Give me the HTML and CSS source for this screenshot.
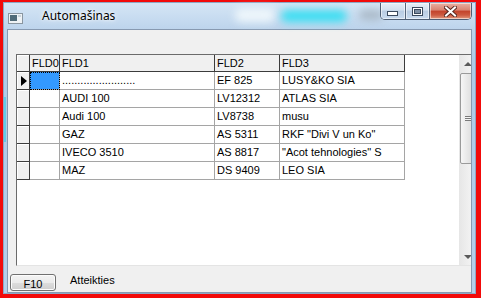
FILE: index.html
```html
<!DOCTYPE html>
<html>
<head>
<meta charset="utf-8">
<link rel="stylesheet" href="styles.css">
</head>
<body>
<div class="window">
  <div class="titlebar">
    <div class="glow glow-white"></div>
    <div class="glow glow-cyan"></div>
    <div class="glow glow-grey"></div>
    <svg class="app-icon" width="15" height="11" viewBox="0 0 15 11">
      <rect x="0.5" y="0.5" width="14" height="10" fill="#eef2f5" stroke="#8a96a0"/>
      <rect x="2" y="2" width="7" height="6" fill="#4f6a78"/>
      <rect x="10" y="2" width="3" height="2" fill="#c9d3da"/>
    </svg>
    <span class="title">Automašinas</span>
    <div class="caption">
      <div class="cbtn cbtn-min">
        <svg width="12" height="6" viewBox="0 0 12 6"><rect x="0.5" y="0.5" width="10" height="4" fill="#fff" stroke="#3b4a5e"/></svg>
      </div>
      <div class="cbtn cbtn-max">
        <svg width="11" height="9" viewBox="0 0 11 9"><rect x="0.5" y="0.5" width="10" height="8" fill="#fff" stroke="#3b4a5e"/><rect x="2.5" y="2.5" width="6" height="4" fill="#7d8ea3" stroke="#3b4a5e"/></svg>
      </div>
      <div class="cbtn cbtn-close">
        <svg width="13" height="11" viewBox="0 0 13 11"><path d="M2 1.5 L11 9.5 M11 1.5 L2 9.5" stroke="#5a2a22" stroke-width="4" stroke-linecap="square"/><path d="M2 1.5 L11 9.5 M11 1.5 L2 9.5" stroke="#fff" stroke-width="2" stroke-linecap="square"/></svg>
      </div>
    </div>
  </div>
  <div class="client">
    <div class="grid">
      <div class="table">
        <div class="cell hdr ind"></div>
        <div class="cell hdr">FLD0</div>
        <div class="cell hdr">FLD1</div>
        <div class="cell hdr">FLD2</div>
        <div class="cell hdr">FLD3</div>

        <div class="cell ind"><span class="arrow"></span></div>
        <div class="cell sel"></div>
        <div class="cell">........................</div>
        <div class="cell">EF 825</div>
        <div class="cell">LUSY&amp;KO SIA</div>

        <div class="cell ind"></div>
        <div class="cell"></div>
        <div class="cell">AUDI 100</div>
        <div class="cell">LV12312</div>
        <div class="cell">ATLAS SIA</div>

        <div class="cell ind"></div>
        <div class="cell"></div>
        <div class="cell">Audi 100</div>
        <div class="cell">LV8738</div>
        <div class="cell">musu</div>

        <div class="cell ind"></div>
        <div class="cell"></div>
        <div class="cell">GAZ</div>
        <div class="cell">AS 5311</div>
        <div class="cell">RKF "Divi V un Ko"</div>

        <div class="cell ind"></div>
        <div class="cell"></div>
        <div class="cell">IVECO 3510</div>
        <div class="cell">AS 8817</div>
        <div class="cell">"Acot tehnologies" S</div>

        <div class="cell ind"></div>
        <div class="cell"></div>
        <div class="cell">MAZ</div>
        <div class="cell">DS 9409</div>
        <div class="cell">LEO SIA</div>
      </div>
      <div class="scrollbar">
        <div class="sb-inner">
          <div class="sb-btn"><span class="tri-up"></span></div>
          <div class="sb-thumb"><span class="grip"></span></div>
          <div class="sb-track"></div>
          <div class="sb-btn"><span class="tri-down"></span></div>
        </div>
      </div>
    </div>
    <div class="footer">
      <div class="btn">F10</div>
      <span class="label">Atteikties</span>
    </div>
  </div>
</div>
</body>
</html>
```
FILE: styles.css
```css
html, body {
  margin: 0;
  padding: 0;
}
body {
  width: 481px;
  height: 298px;
  overflow: hidden;
  background: #f20a0a;
  font-family: "Liberation Sans", Arial, sans-serif;
  font-size: 11px;
  color: #000;
}
.window {
  margin: 2px 0 0 3px;
  width: 473px;
  height: 292px;
  box-sizing: border-box;
  padding: 0 4px 1px 4px;
  display: flex;
  flex-direction: column;
  background:
    linear-gradient(#62cde6, #62cde6) 0 95px / 3px 45px no-repeat,
    linear-gradient(to bottom, #d6e6f5 0px, #c9ddf1 14px, #bdd4ec 27px, #aecbe8 60px, #b6cfe9 100%);
  box-shadow: inset 0 0 0 1px #8ea7c4;
}
.titlebar {
  height: 27px;
  display: flex;
  align-items: flex-start;
  position: relative;
}
.glow {
  position: absolute;
  filter: blur(4px);
  border-radius: 6px;
}
.glow-white {
  left: 228px;
  top: 6px;
  width: 40px;
  height: 14px;
  background: #eef6fb;
}
.glow-cyan {
  left: 274px;
  top: 8px;
  width: 66px;
  height: 12px;
  background: #38def2;
}
.glow-grey {
  left: 352px;
  top: 8px;
  width: 24px;
  height: 10px;
  background: #a9b8c6;
}
.app-icon {
  position: relative;
  margin: 11px 0 0 1px;
  flex: none;
}
.title {
  position: relative;
  margin: 6px 0 0 19px;
  font-family: "Noto Sans", "Open Sans", sans-serif;
  font-size: 12px;
  line-height: 16px;
  color: #000;
  text-shadow: 0 0 6px #fff, 0 0 3px #fff;
}
.caption {
  position: relative;
  margin: 1px 0 0 auto;
  height: 17px;
  display: flex;
  border: 1px solid #4e5e74;
  border-top: none;
  border-radius: 0 0 5px 5px;
  overflow: hidden;
  box-sizing: border-box;
}
.cbtn {
  display: flex;
  align-items: center;
  justify-content: center;
  height: 100%;
  box-shadow: inset 0 0 0 1px rgba(255, 255, 255, 0.55);
}
.cbtn-min {
  width: 24px;
  border-right: 1px solid #56667c;
  background: linear-gradient(#e7eff8, #d2e0ef 45%, #b9cce2 50%, #c8daee);
}
.cbtn-min svg {
  margin-top: 5px;
}
.cbtn-max {
  width: 23px;
  border-right: 1px solid #56667c;
  background: linear-gradient(#e7eff8, #d2e0ef 45%, #b9cce2 50%, #c8daee);
}
.cbtn-close {
  width: 41px;
  background: linear-gradient(#eab2a4, #d98270 45%, #c3432b 50%, #cc5a40 75%, #e29a7f);
}
.client {
  flex: 1;
  display: flex;
  flex-direction: column;
  background: #f0f0f0;
  border: 1px solid #8799b0;
  padding-top: 24px;
  min-height: 0;
}
.grid {
  margin-left: 8px;
  height: 212px;
  box-sizing: border-box;
  display: flex;
  background: #fff;
  border-left: 1px solid #6b6b6b;
  border-top: 1px solid #6b6b6b;
  border-bottom: 1px solid #e4e4e4;
}
.table {
  flex: 1;
  display: grid;
  grid-template-columns: 13px 30px 155px 65px 125px;
  grid-auto-rows: 18px;
  grid-template-rows: 17px;
  align-content: start;
}
.cell {
  box-sizing: border-box;
  border-right: 1px solid #a5a5a5;
  border-bottom: 1px solid #a5a5a5;
  padding-left: 2px;
  line-height: 17px;
  white-space: nowrap;
  overflow: hidden;
}
.hdr {
  background: #f0f0f0;
  border-color: #3c3c3c;
  line-height: 16px;
}
.ind {
  background: #f0f0f0;
  border-color: #3c3c3c;
  box-shadow: inset 1px 1px 0 #fff;
  padding: 0;
  display: flex;
  align-items: center;
  justify-content: center;
}
.arrow {
  width: 0;
  height: 0;
  border-left: 6px solid #000;
  border-top: 5px solid transparent;
  border-bottom: 5px solid transparent;
  margin-left: 1px;
}
.sel {
  background: #3399ff;
  outline: 1px dotted #000;
  outline-offset: -1px;
}
.scrollbar {
  width: 12px;
  overflow: hidden;
  flex: none;
  background: linear-gradient(to right, #e6e6e6, #f2f2f2);
}
.sb-inner {
  width: 17px;
  height: 100%;
  display: flex;
  flex-direction: column;
}
.sb-btn {
  height: 17px;
  flex: none;
  display: flex;
  align-items: center;
  justify-content: center;
}
.tri-up {
  width: 0;
  height: 0;
  border-left: 4px solid transparent;
  border-right: 4px solid transparent;
  border-bottom: 4px solid #5a5a5a;
}
.tri-down {
  width: 0;
  height: 0;
  border-left: 4px solid transparent;
  border-right: 4px solid transparent;
  border-top: 4px solid #5a5a5a;
}
.sb-thumb {
  margin: 1px 0 0 1px;
  height: 91px;
  flex: none;
  box-sizing: border-box;
  border: 1px solid #9a9a9a;
  border-radius: 2px;
  background: linear-gradient(to right, #f6f6f6, #e6e6e6 50%, #d8d8d8);
  display: flex;
  align-items: center;
  justify-content: center;
}
.grip {
  width: 7px;
  height: 5px;
  background: repeating-linear-gradient(to bottom, #7a7a7a 0 1px, #f4f4f4 1px 2px);
}
.sb-track {
  flex: 1;
}
.footer {
  flex: 1;
  display: flex;
  align-items: flex-start;
  padding: 8px 0 0 2px;
}
.btn {
  width: 46px;
  height: 17px;
  box-sizing: border-box;
  border: 1px solid #707070;
  border-radius: 3px;
  background: linear-gradient(#f3f3f3, #ebebeb 50%, #dddddd 51%, #cfcfcf);
  box-shadow: inset 0 0 0 1px #fcfcfc;
  text-align: center;
  line-height: 16px;
  padding-top: 1px;
}
.label {
  margin-left: 14px;
  line-height: 13px;
}
```
